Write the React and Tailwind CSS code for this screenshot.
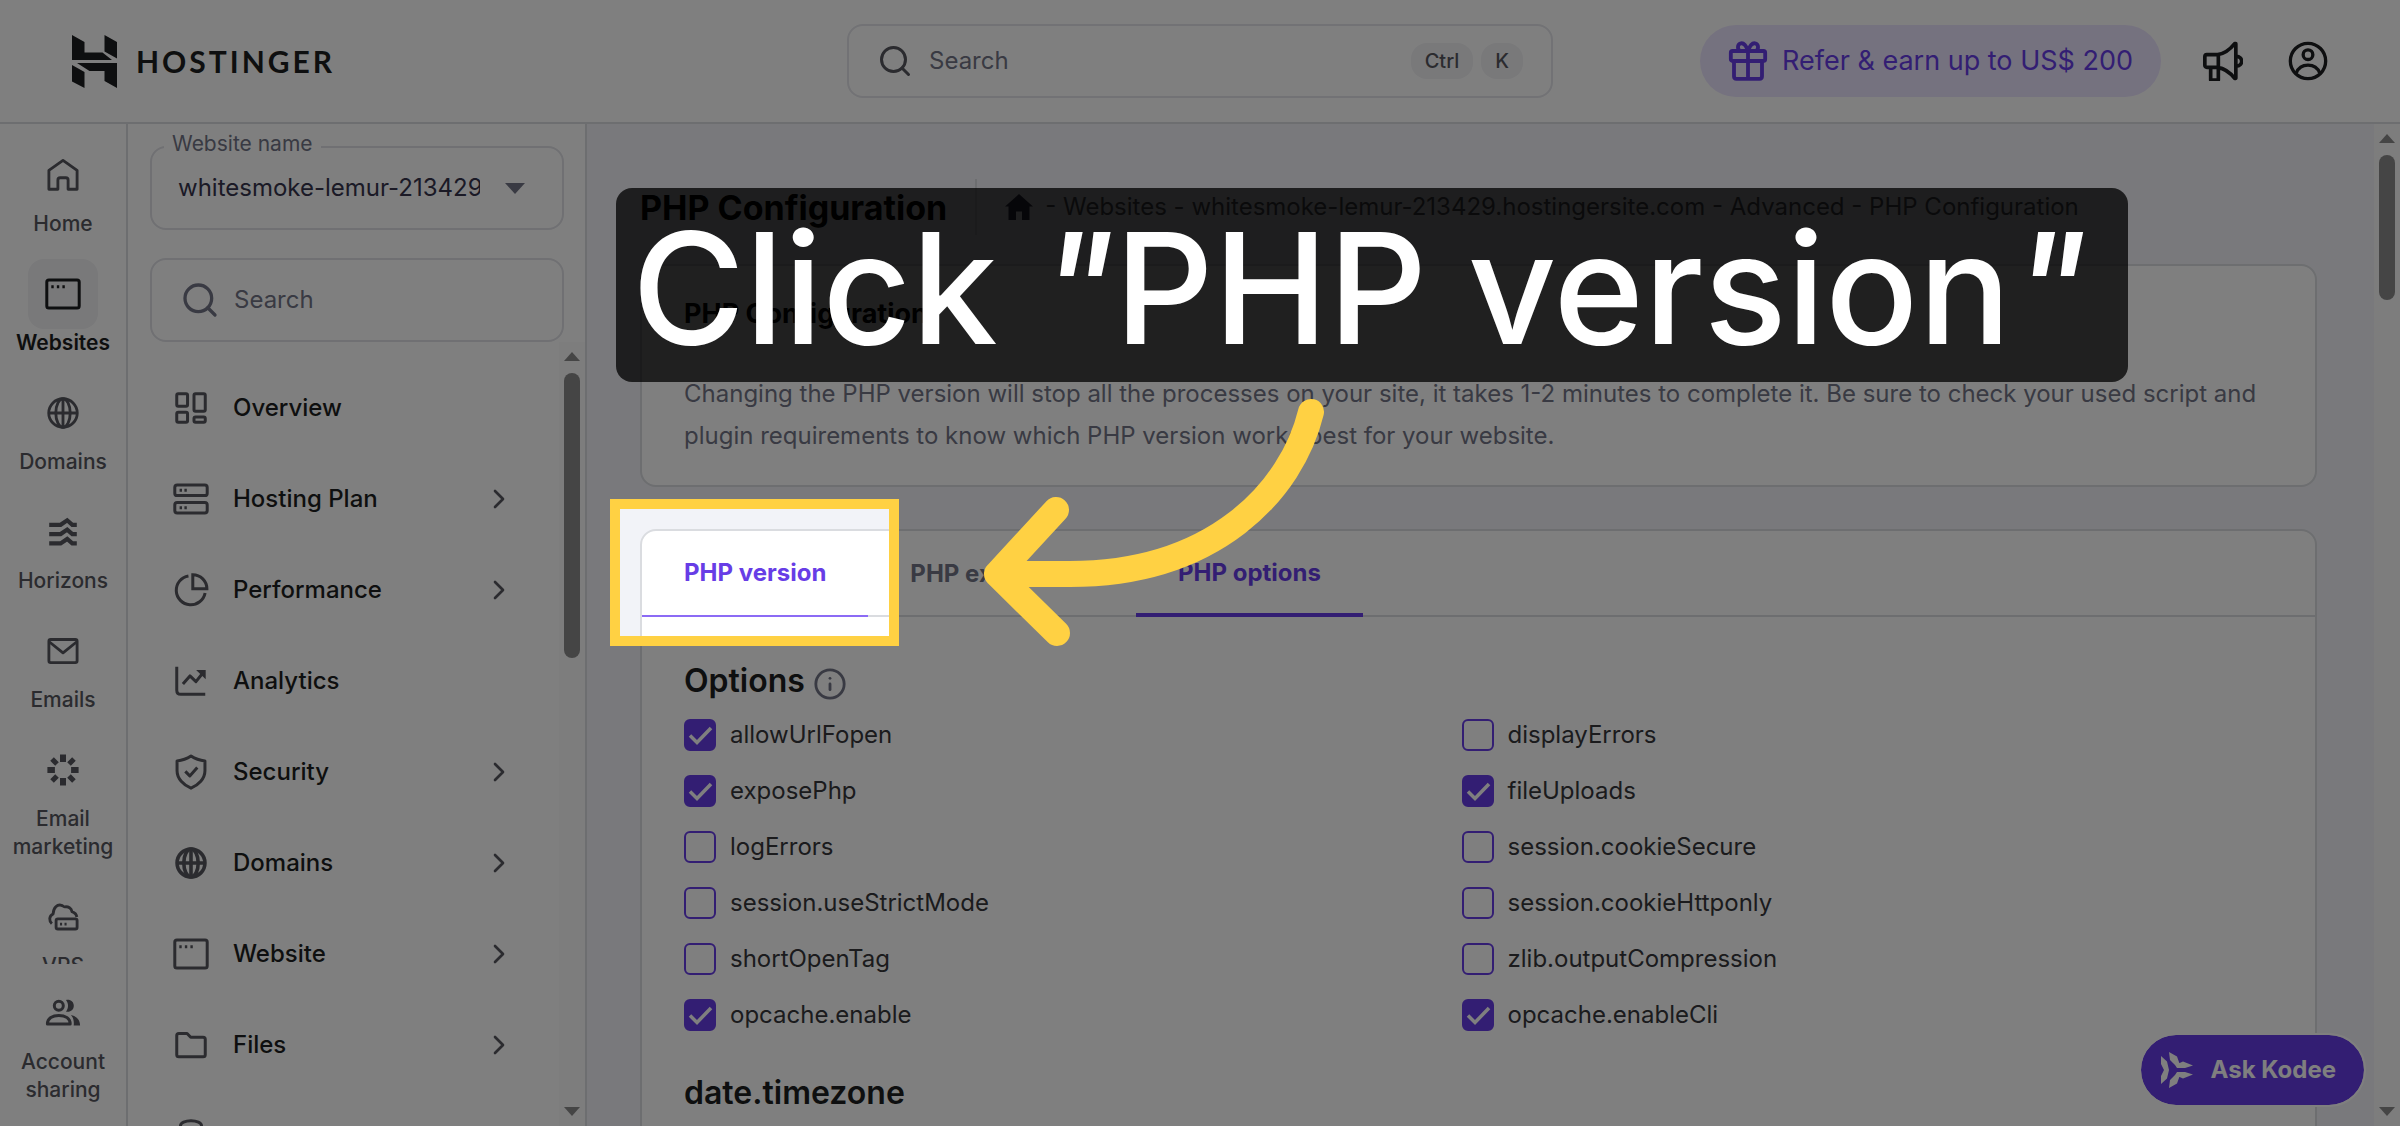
import React, { useState } from 'react';
import { ChevronRight, Info, Search } from 'lucide-react';

const Svg = ({ className = 'size-9', sw = 2, children }) => (
    <svg
        viewBox="0 0 24 24"
        fill="none"
        stroke="currentColor"
        strokeWidth={sw}
        strokeLinejoin="round"
        className={`shrink-0 ${className}`}
        aria-hidden="true"
    >
        {children}
    </svg>
);

const HomeIcon = () => (
    <Svg sw={1.9}>
        <path d="M2.6 8.9 12 2.3l9.4 6.6v12.6h-6v-6.2c0-.9-.6-1.5-1.5-1.5h-3.8c-.9 0-1.5.6-1.5 1.5v6.2h-6z" />
    </Svg>
);

const WindowIcon = () => (
    <Svg>
        <rect x="1.2" y="2.6" width="21.6" height="18.8" rx="1.4" />
        <path d="M4.2 7.2h1.6M7.9 7.2h1.6M11.6 7.2h1.6" />
    </Svg>
);

const GlobeIcon = () => (
    <Svg sw={1.9}>
        <circle cx="12" cy="12" r="9.5" />
        <ellipse cx="12" cy="12" rx="4.8" ry="9.5" />
        <path d="M2.5 12h19M12 2.5v19" />
    </Svg>
);

const GlobeBoldIcon = () => (
    <Svg sw={2.4}>
        <circle cx="12" cy="12" r="9.3" />
        <ellipse cx="12" cy="12" rx="4.8" ry="9.3" />
        <path d="M2.7 12h18.6M12 2.7v18.6" />
    </Svg>
);

const HorizonsIcon = () => (
    <Svg sw={2.8}>
        <path
            strokeLinejoin="miter"
            d="M2.8 7.2h7.6l4.4-3 3.4 3h3M2.8 13.4h7.6l4.4-3 3.4 3h3M2.8 19.6h7.6l4.4-3 3.4 3h3"
        />
    </Svg>
);

const MailIcon = () => (
    <Svg sw={1.9}>
        <rect x="2.6" y="4.3" width="18.8" height="15.4" rx="1.2" />
        <path d="m3 6 9 7.2L21 6" />
    </Svg>
);

const BurstIcon = () => (
    <Svg sw={4}>
        <path d="M12 1.6v5M12 17.4v5M1.6 12h5M17.4 12h5" />
        <path d="m4.7 4.7 3.3 3.3M16 16l3.3 3.3M4.7 19.3 8 16M16 8l3.3-3.3" strokeWidth="3.4" />
    </Svg>
);

const VpsIcon = () => (
    <Svg sw={1.9}>
        <rect x="7.4" y="13.2" width="14" height="6.8" rx="1.2" />
        <path d="M10 16.7h1.4M13 16.7h1.4M4.6 16.4c-2-1.8-2.1-5 .8-6.4C5.6 5.8 8.2 3.4 11 4.2c.9.3 1.7 1.1 2.3 1 2.3-.3 4.2.9 4.7 3.2 1.9.7 3 1.9 3.2 3.6" />
    </Svg>
);

const PeopleIcon = () => (
    <Svg sw={2}>
        <circle cx="9.2" cy="7.2" r="3" />
        <path d="M1.6 19.4c0-4 3.6-5.7 7.6-5.7s7.6 1.7 7.6 5.7z" />
        <path
            d="M14 3.3c3-.6 5.2 1.3 5.2 3.9s-2.2 4.5-5.2 3.9c1.8-2.4 1.8-5.4 0-7.8zM17.3 13.3c3.2.7 6.1 2.9 6.1 7.1h-4.3c.4-2.8-.2-5.2-1.8-7.1z"
            fill="currentColor"
            stroke="none"
        />
    </Svg>
);

const OverviewIcon = () => (
    <Svg>
        <rect x="2.5" y="2.5" width="7.2" height="8.4" rx="1" />
        <rect x="14" y="2.5" width="7.5" height="11.6" rx="1" />
        <rect x="2.5" y="14.8" width="7.2" height="6.7" rx="1" />
        <rect x="14" y="18" width="7.5" height="3.5" rx="1" />
    </Svg>
);

const ServerIcon = () => (
    <Svg>
        <rect x="1.2" y="2.7" width="21.6" height="7" rx="1.6" />
        <rect x="1.2" y="14.3" width="21.6" height="7" rx="1.6" />
        <path d="M4.4 6.2H6M7.6 6.2h1.6M4.4 17.8H6M7.6 17.8h1.6" />
    </Svg>
);

const PieIcon = () => (
    <Svg sw={2}>
        <path d="M10.3 2.6A9.7 9.7 0 1 0 21.4 14" />
        <path d="M13.2 1.8v9.4h9.4c0-5.2-4.2-9.4-9.4-9.4z" strokeLinejoin="miter" />
    </Svg>
);

const AnalyticsIcon = () => (
    <Svg>
        <path d="M2.5 2.5v15.6c0 1.7 1 2.7 2.7 2.7h16.3" />
        <path d="m6.6 14 4.7-5.4 4 3.8 5.4-6.7" />
        <path d="M15.4 4.6h6.4v6.2z" fill="currentColor" stroke="none" />
    </Svg>
);

const ShieldIcon = () => (
    <Svg sw={2}>
        <path d="M12 1.3c2.7 1.8 5.7 2.9 9.3 3.3v6.6c0 5.3-4.3 9.5-9.3 11.6-5-2.1-9.3-6.3-9.3-11.6V4.6C6.3 4.2 9.3 3.1 12 1.3z" />
        <path d="m8.2 11.6 3 3L16.2 9" />
    </Svg>
);

const FolderIcon = () => (
    <Svg>
        <path d="M3.9 4.3h5.5l2.4 2.5h8.3c.8 0 1.4.6 1.4 1.4v10.3c0 .8-.6 1.4-1.4 1.4H3.9c-.8 0-1.4-.6-1.4-1.4V5.7c0-.8.6-1.4 1.4-1.4z" />
    </Svg>
);

const DatabaseIcon = () => (
    <Svg>
        <ellipse cx="12" cy="5.2" rx="7" ry="3.4" />
        <path d="M5 5.2v14c0 1.9 3.1 3.4 7 3.4s7-1.5 7-3.4v-14" />
    </Svg>
);

const GiftIcon = () => (
    <Svg className="size-10" sw={2.3}>
        <rect x="1.7" y="6" width="20.6" height="6" rx="1" />
        <path d="M3.6 12v9.2c0 .9.6 1.5 1.5 1.5h13.8c.9 0 1.5-.6 1.5-1.5V12M12 6v16.5" />
        <path d="M12 6C10.8 2.6 9.2.9 7.4 1.5 5.5 2.2 5.6 5 7.2 6M12 6c1.2-3.4 2.8-5.1 4.6-4.5 1.9.7 1.8 3.5.2 4.5" />
    </Svg>
);

const MegaphoneIcon = () => (
    <Svg className="size-10" sw={2.2}>
        <path d="M2.3 8.2h6.5c4-.6 7.2-2.8 10.2-6.6h.7v20.8H19c-3-3.8-6.2-6-10.2-6.6H2.3c-.7 0-1.2-.5-1.2-1.2V9.4c0-.7.5-1.2 1.2-1.2zM9.2 8.2v15.2H4.6v-7.6" />
        <path d="M20 9.2c1.9.1 3.2 1.3 3.2 2.9S21.9 14.9 20 15" />
    </Svg>
);

const AccountIcon = () => (
    <Svg className="size-10" sw={2}>
        <circle cx="12" cy="12" r="10.6" />
        <circle cx="12" cy="8.2" r="2.9" />
        <path d="M5 19.2c1.2-3.2 3.8-4.7 7-4.7s5.8 1.5 7 4.7" />
    </Svg>
);

const LogoMark = () => (
    <svg viewBox="0 0 45 53" className="h-[53px] w-[45px]" fill="currentColor" aria-hidden="true">
        <path d="M0 0l12.5 7v10.5h18L40 25H0zM32.5 0 45 7v16.5l-12.5-7zM0 30l12.5 7v16L0 46.5zM5 28h40v25l-12.5-7V36h-15z" />
    </svg>
);

const KodeeMark = () => (
    <svg viewBox="0 0 32 36" className="h-9 w-8" fill="currentColor" aria-hidden="true">
        <path d="M0 4l6 5.5 2 8.5-2 8.5L0 32V24l3-6-3-6zM8 0l8 4.5 2.5 7L14 13 9 8zM8 36l8-4.5 2.5-7L14 23l-5 5zM14 13l8-3.5 10 4-8 2.5h-8zM14 23l8 3.5 10-4-8-2.5h-8z" />
    </svg>
);

const railItems = [
    { name: 'Home', icon: HomeIcon },
    { name: 'Websites', icon: WindowIcon, active: true },
    { name: 'Domains', icon: GlobeIcon },
    { name: 'Horizons', icon: HorizonsIcon },
    { name: 'Emails', icon: MailIcon },
    { name: 'Email marketing', icon: BurstIcon },
    { name: 'VPS', icon: VpsIcon },
];

const menuItems = [
    { name: 'Overview', icon: OverviewIcon },
    { name: 'Hosting Plan', icon: ServerIcon, more: true },
    { name: 'Performance', icon: PieIcon, more: true },
    { name: 'Analytics', icon: AnalyticsIcon },
    { name: 'Security', icon: ShieldIcon, more: true },
    { name: 'Domains', icon: GlobeBoldIcon, more: true },
    { name: 'Website', icon: WindowIcon, more: true },
    { name: 'Files', icon: FolderIcon, more: true },
];

const phpOptions = [
    { name: 'allowUrlFopen', on: true },
    { name: 'displayErrors', on: false },
    { name: 'exposePhp', on: true },
    { name: 'fileUploads', on: true },
    { name: 'logErrors', on: false },
    { name: 'session.cookieSecure', on: false },
    { name: 'session.useStrictMode', on: false },
    { name: 'session.cookieHttponly', on: false },
    { name: 'shortOpenTag', on: false },
    { name: 'zlib.outputCompression', on: false },
    { name: 'opcache.enable', on: true },
    { name: 'opcache.enableCli', on: true },
];

function RailItem({ item }) {
    const Icon = item.icon;
    return (
        <a
            href="#"
            className={`flex flex-col items-center text-center text-[21px] leading-7 ${item.active ? 'font-semibold text-[#1d1e20]' : 'font-medium text-[#56575e]'}`}
        >
            <span className={`flex size-[70px] items-center justify-center rounded-2xl ${item.active ? 'bg-[#f2f2f4]' : ''}`}>
                <Icon />
            </span>
            {item.name}
        </a>
    );
}

function Scrollbar({ thumb }) {
    return (
        <div className="flex w-[26px] shrink-0 flex-col items-center bg-[#fafafa] py-2.5">
            <span className="border-x-8 border-b-[9px] border-x-transparent border-b-[#8a8a8a]" />
            <span className={`mt-3 w-4 rounded-full bg-[#8a8a8a] ${thumb}`} />
            <span className="mt-auto border-x-8 border-t-[9px] border-x-transparent border-t-[#8a8a8a]" />
        </div>
    );
}

function Header() {
    return (
        <header className="flex h-[124px] shrink-0 items-center border-b-2 border-[#dadce0] bg-white px-[72px]">
            <a href="#" className="flex flex-1 items-center gap-[19px] text-[#1d1e20]">
                <LogoMark />
                <span className="font-['Lato',sans-serif] text-3xl font-bold tracking-widest">HOSTINGER</span>
            </a>
            <label className="flex h-[74px] w-[706px] items-center rounded-2xl border-2 border-[#e4e5ea] px-7">
                <Search className="size-9 text-[#56575e]" aria-hidden="true" />
                <input
                    type="search"
                    placeholder="Search"
                    aria-label="Search"
                    className="ml-4 min-w-0 flex-1 text-2xl placeholder:text-[#727586] outline-none"
                />
                <kbd className="rounded-2xl bg-[#f2f2f5] px-3.5 py-1 font-['Inter',sans-serif] text-xl leading-7 font-medium text-[#56575e]">Ctrl</kbd>
                <kbd className="ml-2 rounded-2xl bg-[#f2f2f5] px-3.5 py-1 font-['Inter',sans-serif] text-xl leading-7 font-medium text-[#56575e]">K</kbd>
            </label>
            <div className="flex flex-1 items-center justify-end text-[#1d1e20]">
                <button className="flex h-[72px] items-center gap-3.5 rounded-full bg-[#ebe4ff] px-7 text-[27px] whitespace-nowrap text-[#673de6]">
                    <GiftIcon />
                    Refer & earn up to US$ 200
                </button>
                <button className="ml-[42px]" aria-label="Announcements"><MegaphoneIcon /></button>
                <button className="ml-[45px]" aria-label="Account"><AccountIcon /></button>
            </div>
        </header>
    );
}

function Sidebar() {
    return (
        <aside className="flex w-[459px] shrink-0 flex-col border-r-2 border-[#dadce0] bg-white pt-[22px]">
            <div className="px-[22px]">
                <div className="relative">
                    <label htmlFor="site" className="absolute -top-4 left-3.5 bg-white px-2 text-[21px] leading-7 text-[#727586]">
                        Website name
                    </label>
                    <select
                        id="site"
                        className="h-[84px] w-[414px] appearance-none rounded-2xl border-2 border-[#e0e1e6] bg-white pr-[82px] pl-[26px] text-2xl text-[#36344d]"
                    >
                        <option>whitesmoke-lemur-213429.hostingersite.com</option>
                    </select>
                    <span className="absolute top-[37px] left-[355px] border-x-10 border-t-[11px] border-x-transparent border-t-[#727586]" />
                </div>
                <label className="mt-7 flex h-[84px] w-[414px] items-center rounded-2xl border-2 border-[#e0e1e6] pl-7">
                    <Search className="size-10 text-[#727586]" aria-hidden="true" />
                    <input
                        type="search"
                        placeholder="Search"
                        aria-label="Search menu"
                        className="ml-3.5 min-w-0 flex-1 text-2xl placeholder:text-[#727586] outline-none"
                    />
                </label>
            </div>
            <div className="flex min-h-0 flex-1">
                <nav className="min-w-0 flex-1 overflow-hidden pt-5 pr-11 pl-[45px]">
                    {menuItems.map(({ name, icon: Icon, more }) => (
                        <a key={name} href="#" className="flex h-[91px] items-center gap-6 text-2xl font-medium text-[#1d1e20]">
                            <span className="text-[#56575e]"><Icon /></span>
                            <span className="flex-1">{name}</span>
                            {more && <ChevronRight className="size-8 text-[#56575e]" aria-hidden="true" />}
                        </a>
                    ))}
                    <a href="#" aria-label="Databases" className="flex h-[91px] items-center text-[#56575e]">
                        <DatabaseIcon />
                    </a>
                </nav>
                <Scrollbar thumb="h-[285px]" />
            </div>
        </aside>
    );
}

function PhpOption({ option }) {
    return (
        <label className="flex h-14 items-center gap-3.5 text-2xl text-[#36373b]">
            <span className="relative flex size-8">
                <input
                    type="checkbox"
                    defaultChecked={option.on}
                    className="peer size-8 appearance-none rounded-md border-2 border-[#673de6] checked:bg-[#673de6]"
                />
                <svg viewBox="0 0 32 32" className="pointer-events-none absolute inset-0 hidden text-white peer-checked:block" aria-hidden="true">
                    <path d="m6 16.5 7 7L27 9" fill="none" stroke="currentColor" strokeWidth="3.5" />
                </svg>
            </span>
            {option.name}
        </label>
    );
}

function Main() {
    const [tab, setTab] = useState('PHP options');
    return (
        <main className="min-w-0 flex-1 overflow-hidden bg-[#f2f3f8] pt-[55px] pr-[57px] pl-[53px]">
            <div className="flex h-14 items-center whitespace-nowrap">
                <h1 className="text-[34px] font-bold text-black">PHP Configuration</h1>
                <span className="mx-7 h-full w-0.5 bg-[#dadce0]" />
                <nav className="flex items-center gap-3 text-2xl text-[#56575e]">
                    <svg viewBox="0 0 28 26" className="h-[26px] w-7 text-[#36344d]" fill="currentColor" aria-hidden="true">
                        <path d="M14 0l14 12.5h-3.5V26H17v-8.5h-6V26H3.5V12.5H0z" />
                    </svg>
                    <span>- Websites - whitesmoke-lemur-213429.hostingersite.com - Advanced - PHP Configuration</span>
                </nav>
            </div>

            <section className="mt-[29px] rounded-2xl border-2 border-[#dadce0] bg-white px-[42px] pt-[30px] pb-7">
                <h2 className="text-[27px] leading-9 font-bold text-black">PHP Configuration</h2>
                <p className="mt-[41px] text-2xl leading-[42px] text-[#727586]">
                    Changing the PHP version will stop all the processes on your site, it takes 1-2 minutes to complete it. Be sure to check your used script and plugin requirements to know which PHP version works best for your website.
                </p>
            </section>

            <section className="mt-[42px] rounded-2xl border-2 border-[#dadce0] bg-white pb-20">
                <div role="tablist" className="flex h-[86px] border-b-2 border-[#dadce0]">
                    {['PHP version', 'PHP extensions', 'PHP options'].map((name) => (
                        <button
                            key={name}
                            role="tab"
                            aria-selected={tab === name}
                            onClick={() => setTab(name)}
                            className={`-mb-0.5 px-[42px] text-2xl font-bold ${
                                tab === name
                                    ? 'border-b-4 border-[#673de6] pt-0.5 text-[#673de6]'
                                    : name === 'PHP version'
                                      ? 'border-b-2 border-[#8c6bf5] text-[#673de6]'
                                      : 'text-[#727586]'
                            }`}
                        >
                            {name}
                        </button>
                    ))}
                </div>
                <div className="pr-[76px] pl-[42px]">
                    <h2 className="mt-11 flex items-center gap-2 text-[32px] leading-10 font-semibold text-[#1d1e20]">
                        Options
                        <Info className="mt-1.5 size-[34px] text-[#727586]" aria-hidden="true" />
                    </h2>
                    <div className="mt-1.5 grid grid-cols-2">
                        {phpOptions.map((option) => (
                            <PhpOption key={option.name} option={option} />
                        ))}
                    </div>
                    <h2 className="mt-[30px] text-[32px] leading-10 font-semibold text-[#1d1e20]">date.timezone</h2>
                </div>
            </section>
        </main>
    );
}

// Tutorial step drawn above the page: spotlight, arrow and caption
function StepOverlay() {
    return (
        <div className="pointer-events-none absolute inset-0 overflow-hidden">
            <div className="absolute top-[499px] left-[610px] h-[147px] w-[289px] border-10 border-[#ffd143] shadow-[0_0_0_2400px_rgba(0,0,0,0.5)]" />
            <p className="absolute top-[188px] left-[616px] flex h-[194px] w-[1512px] items-center rounded-2xl bg-black/75 pt-1.5 pl-4 text-[154px] leading-none font-medium text-white">
                <span className="whitespace-nowrap">
                    Click <i>"</i>PHP version<i>"</i>
                </span>
            </p>
            <svg viewBox="0 0 360 260" className="absolute top-[390px] left-[974px] h-[260px] w-[360px]" fill="none" aria-hidden="true">
                <path
                    d="M337 22C318 100 241 185 93 184H23M82 120 23 184l60 59"
                    stroke="#ffd143"
                    strokeWidth="26"
                    strokeLinecap="round"
                    strokeLinejoin="round"
                />
            </svg>
        </div>
    );
}

export default function App() {
    return (
        <div className="relative flex h-screen flex-col overflow-hidden bg-white font-['Inter',sans-serif]">
            <Header />
            <div className="flex min-h-0 flex-1">
                <div className="flex w-32 shrink-0 flex-col border-r-2 border-[#dadce0] bg-white">
                    <nav className="flex min-h-0 flex-1 flex-col gap-[21px] overflow-hidden pt-4">
                        {railItems.map((item) => (
                            <RailItem key={item.name} item={item} />
                        ))}
                    </nav>
                    <div className="pt-3.5 pb-[22px]">
                        <RailItem item={{ name: 'Account sharing', icon: PeopleIcon }} />
                    </div>
                </div>
                <Sidebar />
                <Main />
                <Scrollbar thumb="h-[145px]" />
            </div>
            <button className="absolute right-9 bottom-[21px] flex h-[70px] items-center gap-[18px] rounded-full bg-[#673de6] pr-7 pl-5 text-2xl font-bold text-white outline-2 outline-white">
                <KodeeMark />
                Ask Kodee
            </button>
            <StepOverlay />
        </div>
    );
}
